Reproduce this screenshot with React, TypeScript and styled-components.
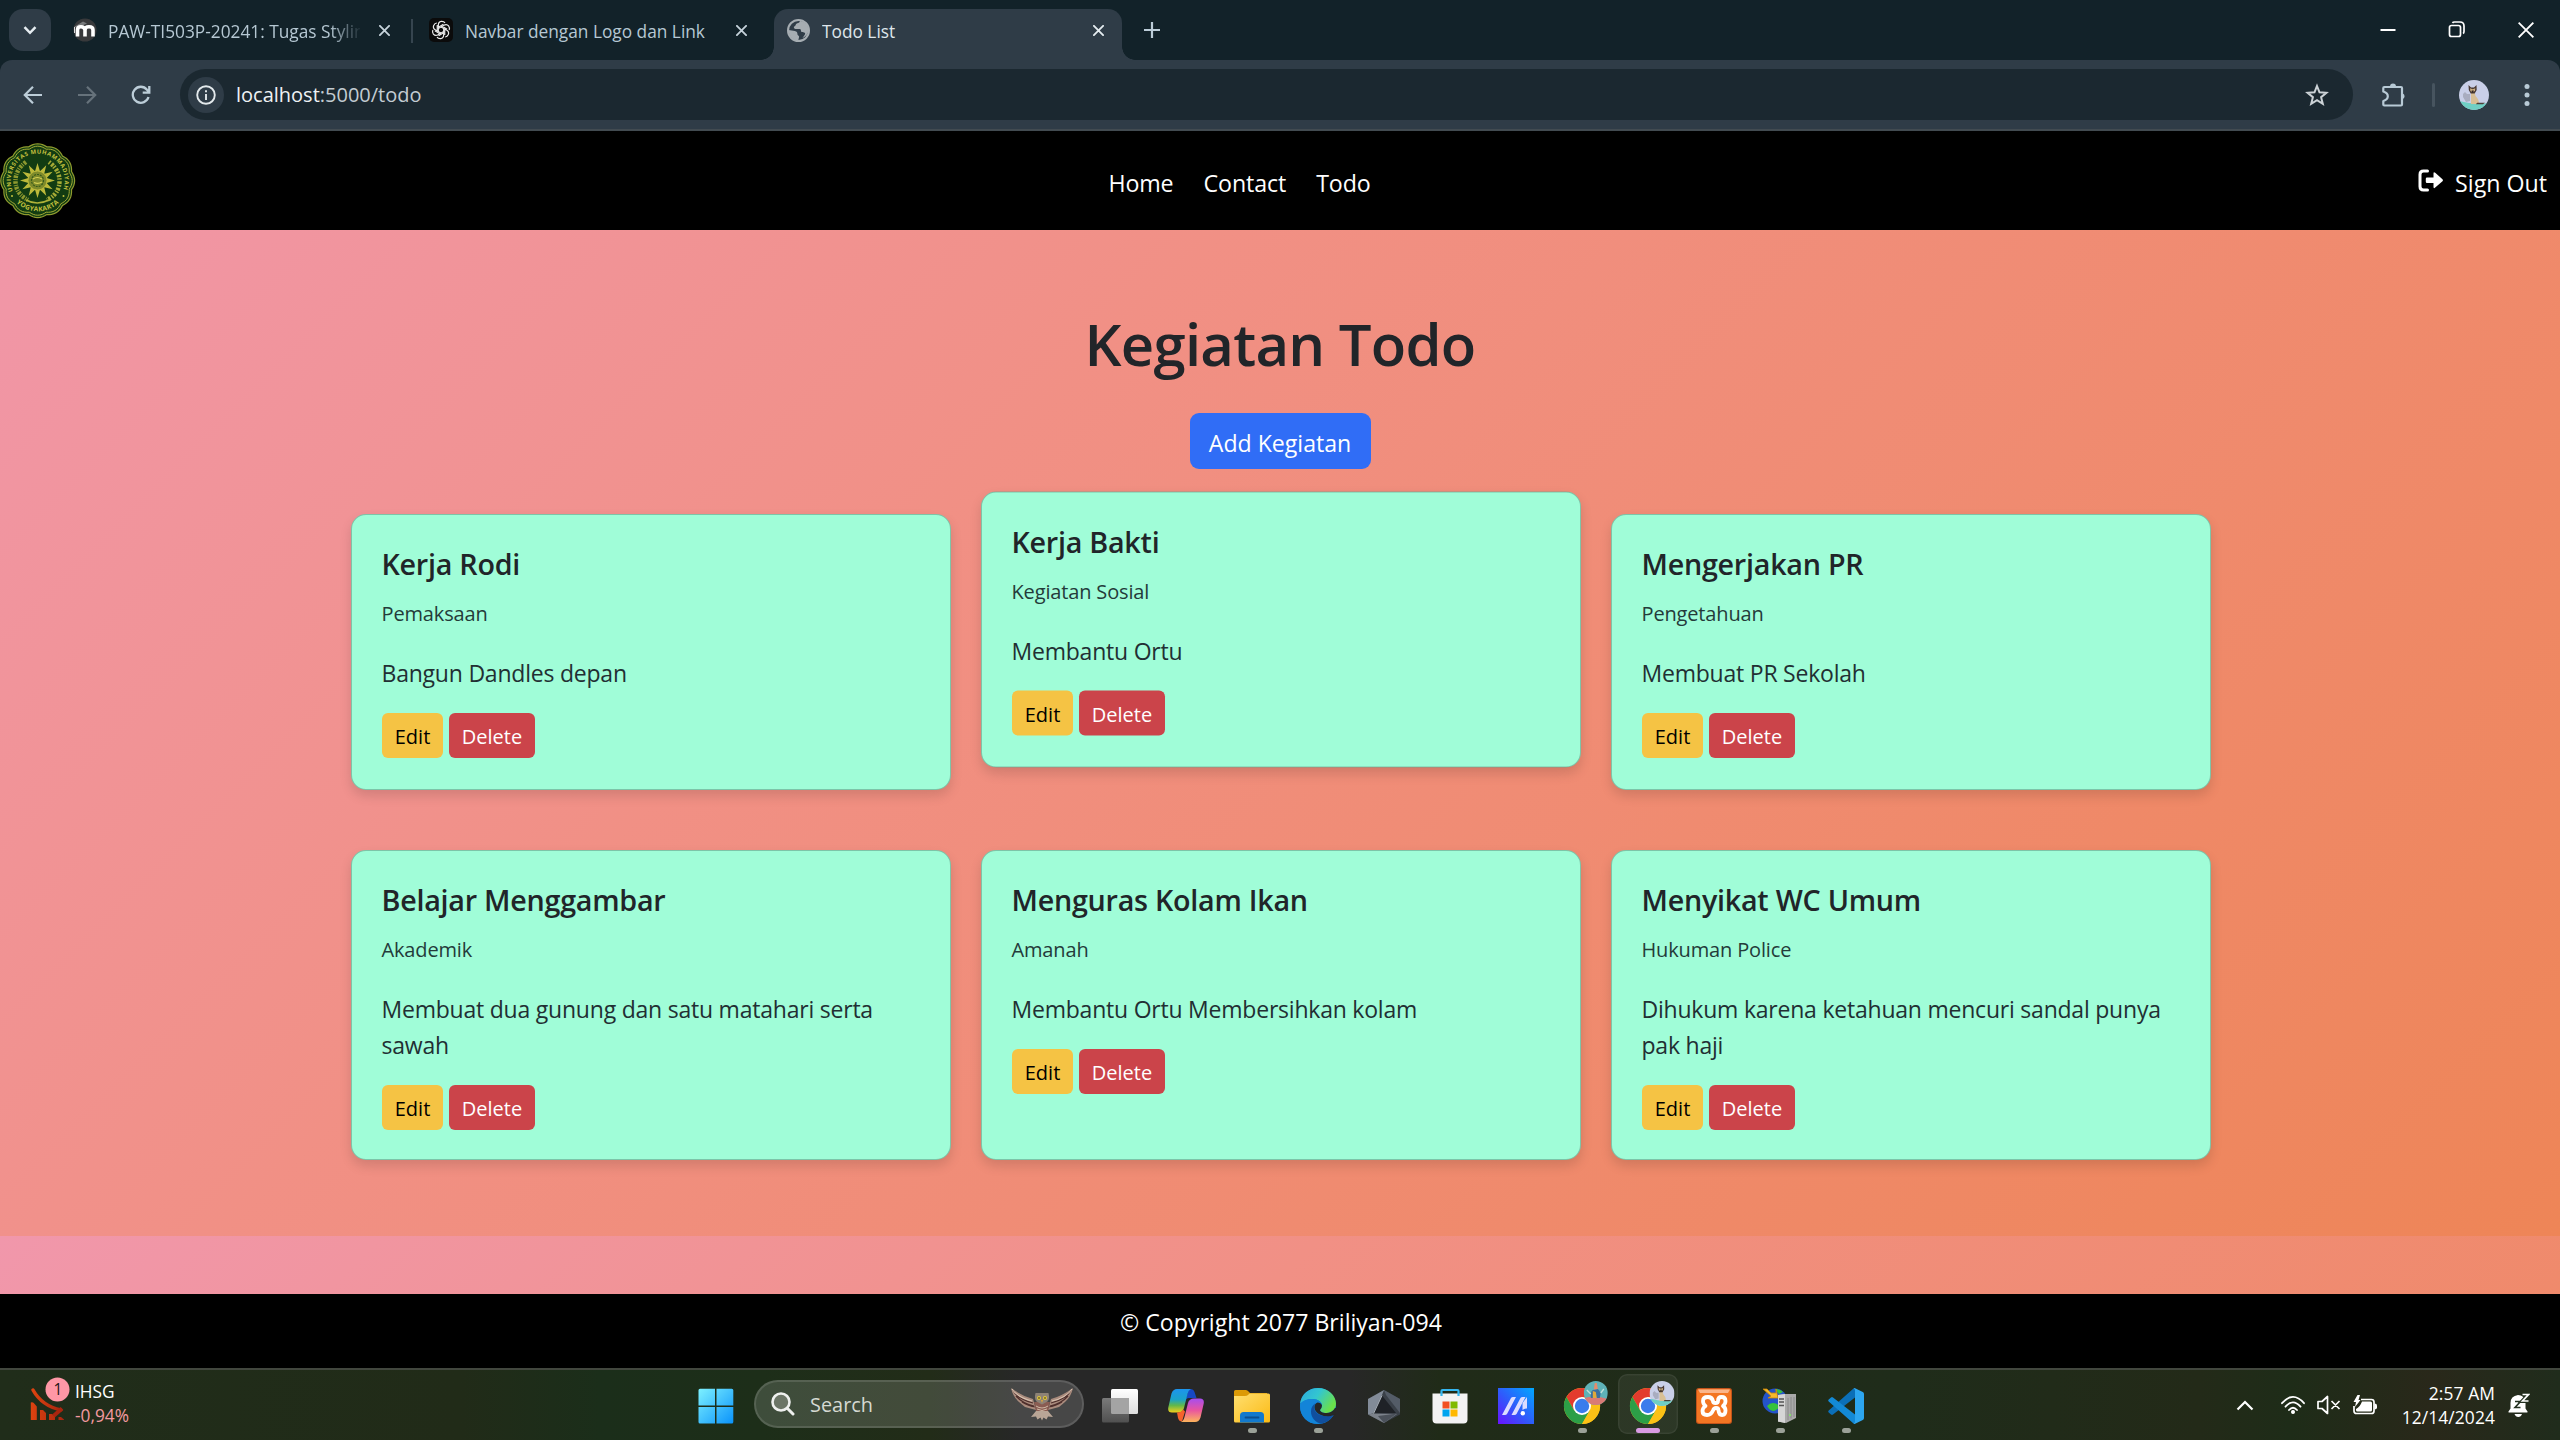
import React from "react";
import styled, { createGlobalStyle } from "styled-components";

const Global = createGlobalStyle`
  *, *::before, *::after { box-sizing: border-box; }
  body {
    margin: 0;
    background: #000;
    font-family: "Open Sans", "Noto Sans", sans-serif;
    overflow: hidden;
  }
  svg { display: block; flex: none; }
`;

const Screen = styled.div`
  width: 2560px;
  height: 1440px;
  display: flex;
  flex-direction: column;
  overflow: hidden;
`;

/* ---------- browser chrome ---------- */

const TabStrip = styled.div`
  height: 60px;
  flex: none;
  background: #122229;
  display: flex;
  align-items: flex-start;
  padding-left: 9px;
`;

const TabSearch = styled.button`
  width: 42px;
  height: 42px;
  margin: 9px 10px 0 0;
  padding: 0;
  border: 0;
  border-radius: 14px;
  background: #2f3c47;
  display: grid;
  place-items: center;
`;

const Tab = styled.div<{ $width: number; $left: number; $right: number; $active?: boolean }>`
  position: relative;
  width: ${(p) => p.$width}px;
  height: ${(p) => (p.$active ? 51 : 42)}px;
  margin-top: 9px;
  padding: 0 ${(p) => p.$right}px ${(p) => (p.$active ? 9 : 0)}px ${(p) => p.$left}px;
  border-radius: 14px 14px 0 0;
  background: ${(p) => (p.$active ? "#2f3c47" : "transparent")};
  color: ${(p) => (p.$active ? "#dfe6eb" : "#b6c8d3")};
  display: flex;
  align-items: center;
  ${(p) =>
    p.$active &&
    `
    &::before, &::after {
      content: "";
      position: absolute;
      bottom: 0;
      width: 13px;
      height: 13px;
    }
    &::before { left: -13px; background: radial-gradient(circle at 0 0, transparent 12.5px, #2f3c47 13px); }
    &::after { right: -13px; background: radial-gradient(circle at 100% 0, transparent 12.5px, #2f3c47 13px); }
  `}
`;

const TabTitle = styled.span<{ $fade?: boolean; $gap?: number }>`
  flex: 1;
  min-width: 0;
  margin: 3px 0 0 ${(p) => p.$gap ?? 12}px;
  font-size: 17.3px;
  line-height: 24px;
  white-space: nowrap;
  overflow: hidden;
  ${(p) => p.$fade && "mask-image: linear-gradient(to right, #000 88%, transparent 101%);"}
`;

const TabClose = styled.span`
  width: 24px;
  height: 24px;
  margin-left: 12px;
  display: grid;
  place-items: center;
`;

const TabDivider = styled.span`
  width: 2px;
  height: 24px;
  margin-top: 19px;
  background: #36454f;
`;

const NewTab = styled.span`
  width: 42px;
  height: 42px;
  margin: 9px 0 0 9px;
  display: grid;
  place-items: center;
`;

const WindowControls = styled.div`
  margin-left: auto;
  display: flex;
`;

const WindowButton = styled.span`
  width: 69px;
  height: 59px;
  display: grid;
  place-items: center;
`;

const ToolbarBack = styled.div`
  height: 71px;
  flex: none;
  background: #122229;
`;

const Toolbar = styled.div`
  height: 71px;
  background: #2f3c47;
  border-bottom: 2px solid #424b51;
  border-radius: 12px 12px 0 0;
  display: flex;
  align-items: center;
  padding: 0 0 0 6px;
`;

const ToolButton = styled.span<{ $gap?: number }>`
  width: 54px;
  height: 54px;
  margin-left: ${(p) => p.$gap ?? 0}px;
  display: grid;
  place-items: center;
`;

const Omnibox = styled.div`
  width: 2173px;
  height: 51px;
  margin-left: 12px;
  border-radius: 26px;
  background: #1b2830;
  display: flex;
  align-items: center;
  padding: 0 24px 0 8px;
`;

const SiteInfo = styled.span`
  width: 36px;
  height: 36px;
  border-radius: 50%;
  background: #2f3c47;
  display: grid;
  place-items: center;
`;

const Url = styled.span`
  margin-left: 12px;
  flex: 1;
  font-size: 20px;
  line-height: 30px;
  color: #c3ccd2;
  b { font-weight: 400; color: #eef2f4; }
`;

const ToolbarDivider = styled.span`
  width: 3px;
  height: 24px;
  margin: 0 24px 0 11px;
  border-radius: 2px;
  background: #47545f;
`;

/* ---------- page ---------- */

const Navbar = styled.nav`
  height: 99px;
  flex: none;
  background: #000;
  display: grid;
  grid-template-columns: 1fr auto 1fr;
  align-items: center;
  color: #fff;
  font-size: 23.2px;
  line-height: 36px;
`;

const Brand = styled.a`
  display: block;
  margin-top: 1px;
`;

const NavLinks = styled.div`
  display: flex;
  gap: 30px;
  margin: 4px 81px 0 0;
  letter-spacing: -0.1px;
`;

const NavLink = styled.a`
  color: #fff;
`;

const SignOut = styled.a`
  justify-self: end;
  display: flex;
  align-items: center;
  gap: 11px;
  padding-right: 13px;
  span { margin-top: 4px; }
`;

const Page = styled.main`
  height: 1064px;
  flex: none;
  background: linear-gradient(135deg, #f197ab 0%, #f19085 36%, #ee8557 100%) 0 -99px / 100% 1105px;
  display: flex;
  flex-direction: column;
  align-items: center;
  padding-top: 78px;
`;

const Heading = styled.h1`
  margin: 0;
  font-size: 58px;
  font-weight: 600;
  line-height: 72px;
  color: #212529;
  letter-spacing: -0.75px;
`;

const AddButton = styled.button`
  width: 181px;
  height: 56px;
  margin: 33px 0 45px;
  padding: 3px 0 0;
  border: 0;
  border-radius: 9px;
  background: #306df6;
  color: #fff;
  font: 400 23.1px/36px "Open Sans", sans-serif;
`;

const CardGrid = styled.div`
  width: 1860px;
  margin-left: 2px;
  display: grid;
  grid-template-columns: repeat(3, 1fr);
  column-gap: 30px;
  row-gap: 60.5px;
`;

const Card = styled.article<{ $raised?: boolean }>`
  min-height: 275.5px;
  padding: 30.5px 29.5px 29px;
  border: 1.5px solid rgba(60, 90, 80, 0.35);
  background: #a0fdd8;
  border-radius: 15px;
  box-shadow: 0 6px 12px rgba(0, 0, 0, 0.13);
  color: #212529;
  transform: translateY(${(p) => (p.$raised ? "-22.5px" : "0")});
`;

const CardTitle = styled.h5`
  margin: 0 0 17px;
  font-size: 28.7px;
  font-weight: 600;
  line-height: 36px;
  letter-spacing: -0.25px;
`;

const CardTag = styled.div`
  font-size: 20px;
  line-height: 30px;
  letter-spacing: -0.15px;
  color: #243b3a;
  margin-bottom: 26px;
`;

const CardText = styled.p`
  margin: 0 0 22px;
  font-size: 23px;
  line-height: 36px;
  letter-spacing: -0.22px;
  color: #222f33;
`;

const CardActions = styled.div`
  display: flex;
  gap: 6px;
`;

const ActionButton = styled.button<{ $danger?: boolean }>`
  width: ${(p) => (p.$danger ? 86 : 61)}px;
  height: 45.5px;
  padding: 3px 0 0 1px;
  border: 0;
  border-radius: 6px;
  background: ${(p) => (p.$danger ? "#cb444a" : "#f5c344")};
  color: ${(p) => (p.$danger ? "#fff" : "#000")};
  font: 400 20px/30px "Open Sans", sans-serif;
`;

const Footer = styled.footer`
  height: 74px;
  flex: none;
  background: #000;
  color: #fff;
  text-align: center;
  padding: 10px 0 0 2px;
  font-size: 23.1px;
  line-height: 36px;
`;

/* ---------- taskbar ---------- */

const Taskbar = styled.div`
  height: 72px;
  flex: none;
  border-top: 2px solid #42473e;
  background: linear-gradient(
    to right,
    #202d1a 0, #212b18 460px, #1b2e1a 600px, #1d2e19 760px, #222c18 930px, #272727 1020px,
    #272727 1350px, #202b18 1440px, #1f2c1a 1900px, #232a18 2200px, #1e2c18 2290px, #29281a 2430px, #202c1c 2560px
  );
  background-clip: padding-box;
  display: grid;
  grid-template-columns: 683px auto 1fr;
  color: #fff;
`;

const Widget = styled.div`
  display: flex;
  align-items: flex-start;
  padding: 4px 0 0 30px;
`;

const WidgetText = styled.div`
  margin: 6px 0 0 5px;
  font-size: 17.3px;
  line-height: 24px;
`;

const Falling = styled.div`
  color: #f49aa0;
`;

const Apps = styled.div`
  display: flex;
`;

const AppCell = styled.div<{ $focused?: boolean }>`
  width: ${(p) => (p.$focused ? 60 : 66)}px;
  height: ${(p) => (p.$focused ? 60 : 68)}px;
  margin: ${(p) => (p.$focused ? "4px 3px 0" : "0")};
  padding-top: ${(p) => (p.$focused ? 5 : 9)}px;
  border-radius: 9px;
  background: ${(p) => (p.$focused ? "rgba(255,255,255,0.06)" : "transparent")};
  box-shadow: ${(p) => (p.$focused ? "inset 0 0 0 1.5px rgba(255,255,255,0.06)" : "none")};
  display: flex;
  flex-direction: column;
  align-items: center;
`;

const IconSlot = styled.span`
  width: 54px;
  height: 45px;
  display: flex;
  align-items: flex-end;
  justify-content: center;
`;

const Indicator = styled.span<{ $focused?: boolean }>`
  width: ${(p) => (p.$focused ? 24 : 9)}px;
  height: 5px;
  margin-top: 4px;
  border-radius: 3px;
  background: ${(p) => (p.$focused ? "#d99be4" : "#9ba198")};
`;

const SearchBox = styled.div`
  width: 330px;
  height: 48px;
  margin: 10px 3px 0 5px;
  border: 2px solid rgba(255, 255, 255, 0.12);
  border-radius: 24px;
  background: rgba(255, 255, 255, 0.15);
  display: flex;
  align-items: center;
  padding: 0 8px 0 15px;
  font-size: 19.9px;
  color: #d5d9d2;
  span { flex: 1; margin: 1px 0 0 15px; }
`;

const Tray = styled.div`
  display: flex;
  justify-content: flex-end;
  align-items: center;
  padding-right: 30px;
`;

const TrayIcon = styled.span<{ $right: number }>`
  margin-right: ${(p) => p.$right}px;
`;

const Clock = styled.div`
  margin: 0 13px 0 0;
  font-size: 17.4px;
  line-height: 24px;
  text-align: right;
  letter-spacing: 0.1px;
`;

/* ---------- icons ---------- */

const CrossIcon = ({ size = 11, color = "#c6d3db", w = 2 }) => (
  <svg width={size} height={size} viewBox="0 0 12 12" stroke={color} strokeWidth={w} strokeLinecap="square">
    <path d="M1 1l10 10M11 1L1 11" />
  </svg>
);

const MoodleIcon = () => (
  <svg width="24" height="24" viewBox="0 0 24 24">
    <circle cx="12" cy="12" r="11.5" fill="#38393b" />
    <path d="M1 9L10 3.500l4 2L5 9.500z" fill="#77797b" />
    <path d="M4.500 18.500V12q0-3.200 3.500-3.200T12 12V18.500M12 12q0-3.200 4-3.200T20 12v6.500" fill="none" stroke="#fff" strokeWidth="3.600" />
    <path d="M1.500 9v6" stroke="#ddd" strokeWidth="1" fill="none" />
  </svg>
);

const GptIcon = () => (
  <svg width="24" height="24" viewBox="0 0 24 24">
    <rect width="24" height="24" rx="5" fill="#0b0b0b" />
    <g fill="none" stroke="#ececec" strokeWidth="1.200" strokeLinejoin="round">
      {[0, 60, 120, 180, 240, 300].map((a) => (
        <path key={a} transform={`rotate(${a} 12 12)`} d="M9.300 13.500V7.200q0-3.400 3-3.800 2.500-.2 3.700 1.500M9.400 9.200l5-2.900" />
      ))}
    </g>
  </svg>
);

const GlobeIcon = () => (
  <svg width="23" height="23" viewBox="0 0 22 22">
    <circle cx="11" cy="11" r="10" fill="#2f3c47" stroke="#a6adb2" strokeWidth="2" />
    <path
      d="M12.500 2c-.5 1.500-1.500 2-3 2.300C8 4.800 8.500 6.500 7.300 7 6 7.500 6.500 9.300 8 9.500h4.500c1 .5.7 2 1.200 2.800 1 .8 2.700.2 3.500 1.200.6 1.200-.6 2-1.200 3-.5.700-.7 1.400-1.500 1.800 3.500-1.300 6-4.500 6-8 0-4.200-3.800-8-8-8.300zM1.500 10.500l6 1c1.800.3 2.500 1.500 2.500 3 0 1.300 1.600 1 1.600 2.500 0 1-.7 2-.6 3.500-5 0-9.500-4-9.500-10z"
      fill="#a6adb2"
    />
  </svg>
);

const BackIcon = ({ color, flip }: { color: string; flip?: boolean }) => (
  <svg width="20" height="20" viewBox="0 0 20 20" fill="none" stroke={color} strokeWidth="2.200" transform={flip ? "scale(-1 1)" : undefined}>
    <path d="M19 10H2.500M10 1.800L1.800 10l8.200 8.200" />
  </svg>
);

const ReloadIcon = () => (
  <svg width="20" height="20" viewBox="0 0 20 20" fill="none" stroke="#bccdd8" strokeWidth="2.300">
    <path d="M17.500 12A8 8 0 1 1 16 4.700L18 7M18.300 1v6.700h-6.600" />
  </svg>
);

const InfoIcon = () => (
  <svg width="20" height="20" viewBox="0 0 20 20">
    <circle cx="10" cy="10" r="8.800" fill="none" stroke="#e3e9ec" strokeWidth="1.900" />
    <path d="M10 9v6M10 5.200v2" stroke="#e3e9ec" strokeWidth="1.900" />
  </svg>
);

const StarIcon = () => (
  <svg width="24" height="24" viewBox="0 0 24 24" fill="none" stroke="#ccd2d6" strokeWidth="2">
    <path d="M12 3l2.500 6.300 6.900.5-5.300 4.400 1.700 6.700L12 17.200l-5.800 3.700 1.700-6.700-5.300-4.400 6.900-.5z" />
  </svg>
);

const PuzzleIcon = () => (
  <svg width="26" height="26" viewBox="0 0 26 26">
    <path
      d="M2.300 6q0-1 1-1H20q1 0 1 1v16.500q0 1-1 1H3.300q-1 0-1-1V19q4.500-1.200 4.500-4.700t-4.500-4.800z"
      fill="none"
      stroke="#b8cad6"
      strokeWidth="2.200"
      strokeLinejoin="round"
    />
    <path d="M9 4.500a3 3 0 0 1 6 0zM21.500 11.200a3.200 3.200 0 0 1 0 6z" fill="#b8cad6" />
  </svg>
);

const CatAvatar = ({ size }: { size: number }) => (
  <svg width={size} height={size} viewBox="0 0 30 30">
    <defs>
      <clipPath id={`cat${size}`}>
        <circle cx="15" cy="15" r="15" />
      </clipPath>
    </defs>
    <g clipPath={`url(#cat${size})`}>
      <rect width="30" height="30" fill="#c9cfe8" />
      <path d="M4 14l2-2 2 2h3v7l-4 1-3-5z" fill="#a9adc0" />
      <path d="M0 21q15 4 30 2v7H0z" fill="#6fcfc4" />
      <path d="M12 12h3.500l1 4q3.500 3 3.500 8h-8z" fill="#d8bf95" />
      <path d="M18 22.800h8l-2 1.400h-7z" fill="#4b4038" />
      <path d="M9.500 5l2.500 2.500h3L17.500 5l.2 5-2 3.500h-4L9.800 10z" fill="#4a3a34" />
      <path d="M11 8.300l2.700 1 2.600-1-.4 2.700-2.200 1-2.300-1z" fill="#cdb083" />
      <path d="M12.500 10.500h2.400L13.700 13z" fill="#2c2320" />
    </g>
  </svg>
);

const MinimizeIcon = () => (
  <svg width="16" height="16" viewBox="0 0 16 16">
    <path d="M.5 8h15" stroke="#fff" strokeWidth="2" />
  </svg>
);

const RestoreIcon = () => (
  <svg width="17" height="17" viewBox="0 0 17 17" fill="none" stroke="#fff" strokeWidth="1.700">
    <rect x="1.500" y="4.500" width="11" height="11" rx="2" />
    <path d="M4.500 2q.5-1 2-1H12q4 0 4 4v5.500q0 1.500-1 2" />
  </svg>
);

const starPoints = (n: number, outer: number, inner: number, c: number) =>
  Array.from({ length: n * 2 }, (_, i) => {
    const r = i % 2 ? inner : outer;
    const a = (i * Math.PI) / n - Math.PI / 2;
    return `${(c + r * Math.cos(a)).toFixed(2)},${(c + r * Math.sin(a)).toFixed(2)}`;
  }).join(" ");

const scallop = (r: number, amp: number) =>
  Array.from({ length: 96 }, (_, i) => {
    const a = (i / 96) * Math.PI * 2;
    const rr = r - amp + amp * Math.abs(Math.cos(a * 6)) * 1.2;
    return `${(37.7 + rr * Math.sin(a)).toFixed(2)},${(37.7 - rr * Math.cos(a)).toFixed(2)}`;
  }).join(" ");

const UniversityLogo = () => (
  <svg width="76" height="76" viewBox="0 0 76 76">
    <defs>
      <path id="ringTop" d="M13.200 49A27 27 0 1 1 62.200 49" />
      <path id="ringBottom" d="M13 56A31 31 0 0 0 62.500 56" />
    </defs>
    <polygon points={scallop(36.6, 1.6)} fill="#123c12" stroke="#8f9a2e" strokeWidth="1.200" />
    <polygon points={scallop(34.2, 1.6)} fill="none" stroke="#a3a934" strokeWidth="1" />
    <path d="M26 19Q15 27 15.500 39T28 57" fill="none" stroke="#8d982f" strokeWidth="4.500" strokeDasharray="2.500 1.200 1 1" />
    <path d="M49 19Q60 27 59.500 39T47 57" fill="none" stroke="#a5aa35" strokeWidth="4.500" strokeDasharray="1.500 1.600 2.500 1" />
    <path d="M26 57q11 6 23 0" fill="none" stroke="#b0b238" strokeWidth="1.600" />
    <polygon points={starPoints(12, 17.5, 9.5, 37.5)} fill="#bcb93a" />
    <circle cx="37.500" cy="37.500" r="9.500" fill="#7f8b2b" stroke="#c0bd3c" strokeWidth="0.800" />
    <circle cx="37.500" cy="37.500" r="6" fill="none" stroke="#375a1b" strokeWidth="1.200" strokeDasharray="2 1" />
    <path d="M33 36q4-3 9 0M34 39.500q4 2 8-.5" stroke="#d7d254" strokeWidth="1.200" fill="none" />
    <g fill="#c5c23f" fontFamily="Open Sans, sans-serif" fontWeight="700">
      <text fontSize="5.800">
        <textPath href="#ringTop" textLength="104" startOffset="1">UNIVERSITAS MUHAMMADIYAH</textPath>
      </text>
      <text fontSize="6.600">
        <textPath href="#ringBottom" textLength="47" startOffset="5">YOGYAKARTA</textPath>
      </text>
    </g>
    <circle cx="12" cy="53" r="1" fill="#c5c23f" />
    <circle cx="63.500" cy="53" r="1" fill="#c5c23f" />
  </svg>
);

const SignOutIcon = () => (
  <svg width="26" height="23" viewBox="0 0 26 23">
    <path d="M9.500 2H5.500Q2 2 2 5.500v12Q2 21 5.500 21h4" fill="none" stroke="#fff" strokeWidth="3" strokeLinecap="round" />
    <path d="M9 8.500h6.500v-4q0-2 1.700-.7l7.300 6.500q1 1 0 2l-7.300 6.300q-1.700 1.300-1.700-.6v-4H9q-1.200 0-1.200-1.200V9.700Q7.800 8.500 9 8.500z" fill="#fff" />
  </svg>
);

const FallingChart = () => (
  <svg width="40" height="46" viewBox="0 0 40 46">
    <defs>
      <linearGradient id="fall" x1="0" x2="1">
        <stop offset="0" stopColor="#dd4310" />
        <stop offset="1" stopColor="#a8250f" />
      </linearGradient>
    </defs>
    <path d="M3 16Q12 32 31 36" fill="none" stroke="url(#fall)" strokeWidth="3.500" strokeLinecap="round" />
    <path d="M23.500 42l8.500-7.500" fill="none" stroke="#a8250f" strokeWidth="4" />
    <path d="M.8 30v-1.500q2-.5 3 .5l3 3.500V46h-6zM10 36h3l3 3v7h-6zM19 40h3l3 3v3h-6zM28.500 43h2.500l3 2.500v.5h-5.500z" fill="url(#fall)" />
    <circle cx="27.500" cy="15.500" r="12" fill="#ff97a6" />
    <text x="28" y="21" textAnchor="middle" fontSize="15.500" fontFamily="Open Sans, sans-serif" fill="#1c1414">1</text>
  </svg>
);

const WindowsIcon = () => (
  <svg width="36" height="36" viewBox="0 0 36 36">
    <defs>
      <linearGradient id="win" x1="0" y1="0" x2="1" y2="1">
        <stop offset="0" stopColor="#7df1ff" />
        <stop offset="1" stopColor="#0a93fb" />
      </linearGradient>
    </defs>
    <path d="M2 .8h15v16.700H.5V2.300Q.5.800 2 .8zM18.500.8h15.300q1.500 0 1.500 1.500v15.200H18.500zM.5 19h16.500v16.500H2Q.5 35.500.5 34zM18.500 19h16.800v15q0 1.500-1.500 1.500H18.500z" fill="url(#win)" />
  </svg>
);

const MagnifierIcon = () => (
  <svg width="24" height="24" viewBox="0 0 24 24" fill="none" stroke="#eef0ee" strokeWidth="2.600" strokeLinecap="round">
    <circle cx="10" cy="10" r="8.500" fill="#6b7566" />
    <path d="M16.300 16.300L22 22" strokeWidth="3" />
  </svg>
);

const OwlIcon = () => (
  <svg width="64" height="34" viewBox="0 0 64 34">
    <path d="M23 12Q12 9 1 1q2 9 8 14l6 5 11 3zM41 12Q52 9 63 1q-2 9-8 14l-6 5-11 3z" fill="#a98b7d" />
    <path d="M3 3q4 9 20 13M6 9q7 8 18 10M12 15q6 4 14 5M61 3q-4 9-20 13M58 9q-7 8-18 10M52 15q-6 4-14 5" fill="none" stroke="#4f2f2c" strokeWidth="1.200" />
    <path d="M2 2q6 9 20 12M62 2q-6 9-20 12" fill="none" stroke="#d9c3b1" strokeWidth="1.100" />
    <path d="M24 15h16l-2 9q-6 4-12 0z" fill="#8a5c52" />
    <path d="M26 19q6 4 12 0M27 22q5 3 10 0" stroke="#d0b9a6" fill="none" />
    <path d="M26 24h12l5 6-5-.5-1.500 3-3-2-1.500 3-1.500-3-3 2-1.500-3-5 .5z" fill="#b9a596" />
    <path d="M25.500 6h13q1.500 6-1 8.500l-5.500 3-5.500-3Q24 12 25.500 6z" fill="#8d8276" />
    <circle cx="29" cy="11" r="2" fill="#e2c738" />
    <circle cx="35" cy="11" r="2" fill="#e2c738" />
    <circle cx="29" cy="11" r=".8" fill="#222" />
    <circle cx="35" cy="11" r=".8" fill="#222" />
    <path d="M31 13h2l-1 3z" fill="#e0a53a" />
  </svg>
);

const TaskViewIcon = () => (
  <svg width="36" height="36" viewBox="0 0 36 36">
    <defs>
      <linearGradient id="tv" x1="0" y1="0" x2="0" y2="1">
        <stop offset="0" stopColor="#fff" />
        <stop offset="1" stopColor="#dedede" />
      </linearGradient>
      <linearGradient id="tvb" x1="0" y1="0" x2="0" y2="1">
        <stop offset="0" stopColor="#7a7a7a" />
        <stop offset="1" stopColor="#505050" />
      </linearGradient>
    </defs>
    <rect x="9" y="1" width="27" height="25" rx="1.500" fill="url(#tv)" />
    <rect x="0" y="10" width="27" height="24.500" rx="1.500" fill="url(#tvb)" />
    <path d="M9 10h18v16H10.500Q9 26 9 24.500z" fill="#a4a4a4" />
  </svg>
);

const CopilotIcon = () => (
  <svg width="36" height="36" viewBox="0 0 36 36">
    <defs>
      <linearGradient id="cp1" x1="0" y1="0" x2="0" y2="1">
        <stop offset="0" stopColor="#1d94ee" />
        <stop offset=".45" stopColor="#1aa3c8" />
        <stop offset=".7" stopColor="#62b84a" />
        <stop offset="1" stopColor="#f2cf1c" />
      </linearGradient>
      <linearGradient id="cp2" x1="0" y1="0" x2="0" y2="1">
        <stop offset="0" stopColor="#a64df0" />
        <stop offset=".5" stopColor="#e9559f" />
        <stop offset="1" stopColor="#fdb45c" />
      </linearGradient>
    </defs>
    <path d="M21 1h1.500q3 0 4 3l2 6H21q-3 0-4 3z" fill="#1648c4" />
    <path d="M9 1h14q-2.500 1-3.500 5l-3.500 14q-1.200 4.500-6 4.500H4q-5 0-3.500-6l3-13Q5 1 9 1z" fill="url(#cp1)" />
    <path d="M9 24.500q4.500 0 6-3l2 2-3 10q-3 0-4-3.500z" fill="#f5622d" />
    <path d="M27 34H13q2.500-1 3.500-5L20 15q1.200-4.500 6-4.500h6q5 0 3.500 6l-3 13Q31 34 27 34z" fill="url(#cp2)" />
  </svg>
);

const FolderIcon = () => (
  <svg width="36" height="36" viewBox="0 0 36 36">
    <defs>
      <linearGradient id="fo" x1="0" y1="0" x2="1" y2="1">
        <stop offset="0" stopColor="#ffdf70" />
        <stop offset="1" stopColor="#fbba14" />
      </linearGradient>
    </defs>
    <path d="M0 3.500Q0 2 1.500 2h10q1.500 0 2.500 1l2 2H33v5H0z" fill="#dc9a06" />
    <path d="M0 8h11q2 0 3-1l1.500-1.500H34.500Q36 5.500 36 7v26q0 1.500-1.500 1.500h-33Q0 34.500 0 33z" fill="url(#fo)" />
    <path d="M6 34.500V27.500Q6 24 9.500 24h17q3.500 0 3.500 3.500v7z" fill="#1279cd" />
    <path d="M11.500 29.500h13" stroke="#0a4f8f" strokeWidth="1.800" strokeLinecap="round" />
  </svg>
);

const EdgeIcon = () => (
  <svg width="36" height="36" viewBox="0 0 36 36">
    <defs>
      <linearGradient id="ed1" x1="0" y1="0" x2="1" y2=".5">
        <stop offset="0" stopColor="#2ba8e0" />
        <stop offset=".5" stopColor="#33c6d0" />
        <stop offset="1" stopColor="#6ae04a" />
      </linearGradient>
    </defs>
    <circle cx="18" cy="18" r="18" fill="#0d7ad0" />
    <path d="M0 16C1 6 9 0 18 0c10 0 18 7.500 18 15.500 0 6-4.500 9.500-9.500 9.500-4 0-6.500-1.500-6.500-3 0-1 2-2 2-4.500 0-3.500-4-6.500-9-6.500C6.500 11 1.500 14 0 16z" fill="url(#ed1)" />
    <path d="M0 16q4-5 12-5c6 0 10 3 10 6.500 0 0-1-2.500-4-2.500-4 0-7 4-7 8.500 0 6 4.500 11.500 10 12C10 38 0 30 0 18z" fill="#1384d8" />
    <path d="M15 15.500q-4 3-4 8c0 6 5 12 11 12 6-1.500 10-5 11.500-9q-3 1.800-7 1.800c-7 0-12.500-4-12.500-9z" fill="#104f9e" />
    <path d="M17.500 14.500q3.500 0 4.500 3 0 2-2 4.500c0 1.500 2 3 6.500 3 3.500 0 6.500-1.800 8.500-5h2v6l-4 1.200q-2 1-5 1-4 .2-7-1.200c-4.500-1.800-6.500-4.800-6.500-7.800 0-2 1-4 3-4.700z" fill="#262726" />
  </svg>
);

const ArmouryIcon = () => (
  <svg width="36" height="36" viewBox="0 0 36 36">
    <path d="M18 2L34 11v15.500L18 35 2 26.500V11z" fill="#3a4048" />
    <path d="M18 2L2 11v15.500l5-1L16 7z" fill="#828b98" />
    <path d="M18 2l16 9v14L20 7z" fill="#545c67" />
    <path d="M16 7.500l14 17.500-22 .5z" fill="#1f2227" />
    <path d="M2 26.500L18 35l13-9-23-.5z" fill="#7c828b" />
    <path d="M18 35l-6-7 19-2.500z" fill="#4b515a" />
    <path d="M16 7.500L7.500 25.500" stroke="#aeb5be" strokeWidth="1" />
  </svg>
);

const StoreIcon = () => (
  <svg width="36" height="36" viewBox="0 0 36 36">
    <path d="M.5 5.500h35v26q0 4-4 4h-27q-4 0-4-4z" fill="#f3f3f3" />
    <path d="M9.500 8V3q0-1 1-1h15q1 0 1 1v5" fill="none" stroke="#35b6ef" strokeWidth="2.200" />
    <path d="M10.500 13.500h7v7h-7z" fill="#f25022" />
    <path d="M18.500 13.500h7v7h-7z" fill="#7fba00" />
    <path d="M10.500 21.500h7v7h-7z" fill="#00a4ef" />
    <path d="M18.500 21.500h7v7h-7z" fill="#ffb900" />
  </svg>
);

const MyAsusIcon = () => (
  <svg width="36" height="36" viewBox="0 0 36 36">
    <defs>
      <linearGradient id="ma" x1="0" y1="1" x2="1" y2="0">
        <stop offset="0" stopColor="#6a12ff" />
        <stop offset=".45" stopColor="#3158fb" />
        <stop offset="1" stopColor="#00a9ff" />
      </linearGradient>
    </defs>
    <path d="M0 0h36v36H0z" fill="url(#ma)" />
    <path d="M4 27L13 10q.6-1 2-1h3L9 26q-.6 1-2 1zM13.500 27l9-17q.6-1 2-1h3L18.500 26q-.6 1-2 1z" fill="#dcdcff" />
    <path d="M24.500 15L29 9v11.500q-2.500-.5-4.500 1.500z" fill="#dcdcff" />
    <circle cx="24.800" cy="25.200" r="2.200" fill="#fff" />
  </svg>
);

const ChromeIcon = ({ badge }: { badge: "cat" | "bird" }) => (
  <svg width="54" height="45" viewBox="-9 -9 54 45">
    <circle cx="18" cy="18" r="18" fill="#fbc116" />
    <path d="M18 9h15.600A18 18 0 0 0 2.400 9l7.800 13.500z" fill="#e33b2e" />
    <path d="M2.400 9A18 18 0 0 0 18 36l7.800-13.500H10.200z" fill="#2c9f47" />
    <path d="M33.600 9A18 18 0 0 1 18 36l7.800-13.500L26 9z" fill="#fbc116" />
    <circle cx="18" cy="18" r="9" fill="#fff" />
    <circle cx="18" cy="18" r="7.200" fill="#3a7cec" />
    {badge === "cat" ? (
      <g transform="translate(19.500 -7)">
        <CatAvatar size={25} />
      </g>
    ) : (
      <g transform="translate(19.800 -7)">
        <clipPath id="birdClip">
          <circle cx="12" cy="12" r="12" />
        </clipPath>
        <g clipPath="url(#birdClip)">
          <path d="M0 0h24v24H0z" fill="#5fb3b8" />
          <path d="M0 17q12-3 24 1v6H0z" fill="#d97a76" />
          <path d="M7 17q-1-6 2-8l5-1q4 3 2 9z" fill="#3b6fa0" />
          <path d="M9 17V10l3 1 1 6z" fill="#e0a93a" />
          <path d="M11 2l2 0 1 6-4 .5z" fill="#e58b6a" />
          <path d="M3 9l4 4M20 8l-3 4" stroke="#bfe0da" strokeWidth="1.300" />
        </g>
      </g>
    )}
  </svg>
);

const XamppIcon = () => (
  <svg width="36" height="36" viewBox="0 0 36 36">
    <rect width="36" height="36" rx="3" fill="#c2531a" />
    <rect x="1" y="1" width="34" height="34" rx="2.500" fill="#f37623" />
    <path d="M2 1.500h32l-2 3.500H4z" fill="#fbb58a" />
    <path
      d="M17 13q-1-4-5-4-5 0-5 4 0 3 2.500 5Q6.500 20 6.500 23q0 4 4.500 4 4 0 6-4.500 1-2.500 3-2.500 2.500 0 2.500 2.500Q23 27 26 27q3.500 0 3.500-4.500 0-3-2.500-4.500 2.500-2 2.500-5 0-4-4-4-3.500 0-3.500 4 0 2-2.500 2T17 13z"
      fill="none"
      stroke="#fff"
      strokeWidth="3.800"
      strokeLinejoin="round"
    />
  </svg>
);

const ServerIcon = () => (
  <svg width="36" height="36" viewBox="0 0 36 36">
    <circle cx="13" cy="13" r="12.500" fill="#2453c9" />
    <path d="M5 18q4-5 10-2 4 3-1 6-5 3-9-4zM13 1q5 0 8 3l-4 2zM18 9l6 1v5l-5-1z" fill="#36c23b" />
    <path d="M1 1h4l4 4 5 0V1l2 9H6l3-2z" fill="#f5b92b" stroke="#c98508" strokeWidth=".8" />
    <path d="M16 7l7-1h11v24l-10 5-8-1.500z" fill="#a9a9a9" />
    <path d="M16 7l7-1v29l-7-1.500z" fill="#d6d6d6" />
    <path d="M17 11h5M17 14h5M17 17.500h5" stroke="#555" strokeWidth="1.400" />
    <path d="M26 10v22M29 9v21.500M32 9v20" stroke="#8a8a8a" strokeWidth="1" />
    <circle cx="28" cy="27" r="1" fill="#7ff05f" />
  </svg>
);

const VsCodeIcon = () => (
  <svg width="36" height="36" viewBox="0 0 36 36">
    <path d="M25.500.5L35 5v7L27 9.500 5 26.500q-1 .8-2 0L.7 24.400q-1-1 0-2z" fill="#0b6fb8" />
    <path d="M25.500 35.500L35 31v-7l-8 2.500L5 9.500q-1-.8-2 0L.7 11.600q-1 1 0 2z" fill="#1389d6" />
    <path d="M25.500 35.700q1.500-.7 1.500-2.200v-31Q27 1 25.500.3q.8-.4 1.600 0L34.800 4q1.200.6 1.200 2v24q0 1.400-1.200 2l-7.700 3.700q-.8.400-1.600 0z" fill="#2da6f0" />
  </svg>
);

const ChevronUp = () => (
  <svg width="18" height="12" viewBox="0 0 18 12" fill="none" stroke="#fff" strokeWidth="2.200">
    <path d="M1.500 10.500L9 3l7.500 7.500" />
  </svg>
);

const WifiIcon = () => (
  <svg width="24" height="20" viewBox="0 0 24 20" fill="none" stroke="#fff" strokeWidth="1.800" strokeLinecap="round">
    <path d="M1 8.200q11-12.500 22 0M4.500 11.700q7.500-8.500 15 0M8 15q4-4.500 8 0" />
    <circle cx="12" cy="17" r="1.400" fill="#fff" strokeWidth="1.200" />
  </svg>
);

const MuteIcon = () => (
  <svg width="24" height="20" viewBox="0 0 24 20" fill="none" stroke="#fff" strokeWidth="1.700" strokeLinejoin="round">
    <path d="M1 6.500h4L10.500 1.500v17L5 13.500H1zM14.500 6l8 8M22.500 6l-8 8" />
  </svg>
);

const BatteryIcon = () => (
  <svg width="24" height="22" viewBox="0 0 24 22">
    <path d="M8 5.500h10.500q2.500 0 2.500 2.500v9q0 2.500-2.500 2.500h-15Q1 19.500 1 17v-5" fill="none" stroke="#fff" strokeWidth="1.700" />
    <path d="M9 7.500h8.500q1.500 0 1.500 1.500v7q0 1.500-1.500 1.500h-13Q3 17.500 3 16v-1q4-2 6-7.500z" fill="#fff" />
    <path d="M21.500 9.500q2.500 0 2.500 2v2q0 2-2.500 2z" fill="#fff" />
    <path d="M4.500 1L.5 8h2.500L2 13l5.500-7H5.500L7 1z" fill="#fff" />
  </svg>
);

const BellIcon = () => (
  <svg width="22" height="24" viewBox="0 0 22 24">
    <path d="M10 2Q2.500 3 2.500 10v5.500L.5 18.500q-.5 1 .5 1h18q1 0 .5-1l-2-3V8Q16 2 10 2z" fill="#fff" />
    <path d="M6.500 21h7.500q-1 3-3.700 3t-3.800-3z" fill="#fff" />
    <path d="M7 8.500h5.500L7 14.500h5.500" fill="none" stroke="#22301f" strokeWidth="1.600" />
    <path d="M14.500 1.500h6l-6 6.500h6" fill="none" stroke="#22301f" strokeWidth="4" />
    <path d="M14.500 1.500h6l-6 6.500h6" fill="none" stroke="#fff" strokeWidth="1.700" />
  </svg>
);

/* ---------- data ---------- */

interface Todo {
  title: string;
  tag: string;
  text: string;
  raised?: boolean;
}

const todos: Todo[] = [
  { title: "Kerja Rodi", tag: "Pemaksaan", text: "Bangun Dandles depan" },
  { title: "Kerja Bakti", tag: "Kegiatan Sosial", text: "Membantu Ortu", raised: true },
  { title: "Mengerjakan PR", tag: "Pengetahuan", text: "Membuat PR Sekolah" },
  { title: "Belajar Menggambar", tag: "Akademik", text: "Membuat dua gunung dan satu matahari serta sawah" },
  { title: "Menguras Kolam Ikan", tag: "Amanah", text: "Membantu Ortu Membersihkan kolam" },
  { title: "Menyikat WC Umum", tag: "Hukuman Police", text: "Dihukum karena ketahuan mencuri sandal punya pak haji" },
];

interface PinnedApp {
  id: string;
  icon: React.ReactNode;
  open?: boolean;
}

const pinnedApps: PinnedApp[] = [
  { id: "view", icon: <TaskViewIcon /> },
  { id: "copilot", icon: <CopilotIcon /> },
  { id: "files", icon: <FolderIcon />, open: true },
  { id: "edge", icon: <EdgeIcon />, open: true },
  { id: "armoury", icon: <ArmouryIcon /> },
  { id: "store", icon: <StoreIcon /> },
  { id: "asus", icon: <MyAsusIcon /> },
];

const runningApps: PinnedApp[] = [
  { id: "xampp", icon: <XamppIcon />, open: true },
  { id: "server", icon: <ServerIcon />, open: true },
  { id: "code", icon: <VsCodeIcon />, open: true },
];

const AppButton = ({ app }: { app: PinnedApp }) => (
  <AppCell>
    <IconSlot>{app.icon}</IconSlot>
    {app.open && <Indicator />}
  </AppCell>
);

const App = () => (
  <>
    <Global />
    <Screen>
      <TabStrip>
        <TabSearch>
          <svg width="14" height="9" viewBox="0 0 14 9" fill="none" stroke="#e6edf1" strokeWidth="2.500">
            <path d="M1.500 1.200L7 6.800l5.500-5.600" />
          </svg>
        </TabSearch>
        <Tab $width={350} $left={12} $right={15}>
          <MoodleIcon />
          <TabTitle $fade $gap={11}>
            PAW-TI503P-20241: Tugas Stylin
          </TabTitle>
          <TabClose>
            <CrossIcon />
          </TabClose>
        </Tab>
        <TabDivider />
        <Tab $width={361} $left={16} $right={21}>
          <GptIcon />
          <TabTitle>Navbar dengan Logo dan Link</TabTitle>
          <TabClose>
            <CrossIcon />
          </TabClose>
        </Tab>
        <Tab $width={348} $left={13} $right={12} $active>
          <GlobeIcon />
          <TabTitle>Todo List</TabTitle>
          <TabClose>
            <CrossIcon color="#e6edf1" />
          </TabClose>
        </Tab>
        <NewTab>
          <svg width="16" height="16" viewBox="0 0 16 16" stroke="#bccdd8" strokeWidth="2.200">
            <path d="M8 0v16M0 8h16" />
          </svg>
        </NewTab>
        <WindowControls>
          <WindowButton>
            <MinimizeIcon />
          </WindowButton>
          <WindowButton>
            <RestoreIcon />
          </WindowButton>
          <WindowButton>
            <CrossIcon size={16} color="#fff" w={1.4} />
          </WindowButton>
        </WindowControls>
      </TabStrip>
      <ToolbarBack>
        <Toolbar>
          <ToolButton>
            <BackIcon color="#bccdd8" />
          </ToolButton>
          <ToolButton>
            <BackIcon color="#66727b" flip />
          </ToolButton>
          <ToolButton>
            <ReloadIcon />
          </ToolButton>
          <Omnibox>
            <SiteInfo>
              <InfoIcon />
            </SiteInfo>
            <Url>
              <b>localhost</b>:5000/todo
            </Url>
            <StarIcon />
          </Omnibox>
          <ToolButton $gap={14}>
            <PuzzleIcon />
          </ToolButton>
          <ToolbarDivider />
          <CatAvatar size={30} />
          <ToolButton $gap={11}>
            <svg width="6" height="24" viewBox="0 0 6 24" fill="#b8cad6">
              <circle cx="3" cy="3.500" r="2.500" />
              <circle cx="3" cy="12" r="2.500" />
              <circle cx="3" cy="20.500" r="2.500" />
            </svg>
          </ToolButton>
        </Toolbar>
      </ToolbarBack>

      <Navbar>
        <Brand>
          <UniversityLogo />
        </Brand>
        <NavLinks>
          <NavLink>Home</NavLink>
          <NavLink>Contact</NavLink>
          <NavLink>Todo</NavLink>
        </NavLinks>
        <SignOut>
          <SignOutIcon />
          <span>Sign Out</span>
        </SignOut>
      </Navbar>

      <Page>
        <Heading>Kegiatan Todo</Heading>
        <AddButton>Add Kegiatan</AddButton>
        <CardGrid>
          {todos.map((t) => (
            <Card key={t.title} $raised={t.raised}>
              <CardTitle>{t.title}</CardTitle>
              <CardTag>{t.tag}</CardTag>
              <CardText>{t.text}</CardText>
              <CardActions>
                <ActionButton>Edit</ActionButton>
                <ActionButton $danger>Delete</ActionButton>
              </CardActions>
            </Card>
          ))}
        </CardGrid>
      </Page>

      <Footer>© Copyright 2077 Briliyan-094</Footer>

      <Taskbar>
        <Widget>
          <FallingChart />
          <WidgetText>
            <div>IHSG</div>
            <Falling>-0,94%</Falling>
          </WidgetText>
        </Widget>
        <Apps>
          <AppButton app={{ id: "start", icon: <WindowsIcon /> }} />
          <SearchBox>
            <MagnifierIcon />
            <span>Search</span>
            <OwlIcon />
          </SearchBox>
          {pinnedApps.map((a) => (
            <AppButton key={a.id} app={a} />
          ))}
          <AppCell>
            <ChromeIcon badge="bird" />
            <Indicator />
          </AppCell>
          <AppCell $focused>
            <ChromeIcon badge="cat" />
            <Indicator $focused />
          </AppCell>
          {runningApps.map((a) => (
            <AppButton key={a.id} app={a} />
          ))}
        </Apps>
        <Tray>
          <TrayIcon $right={27}>
            <ChevronUp />
          </TrayIcon>
          <TrayIcon $right={12}>
            <WifiIcon />
          </TrayIcon>
          <TrayIcon $right={12}>
            <MuteIcon />
          </TrayIcon>
          <TrayIcon $right={25}>
            <BatteryIcon />
          </TrayIcon>
          <Clock>
            <div>2:57 AM</div>
            <div>12/14/2024</div>
          </Clock>
          <BellIcon />
        </Tray>
      </Taskbar>
    </Screen>
  </>
);

export default App;
